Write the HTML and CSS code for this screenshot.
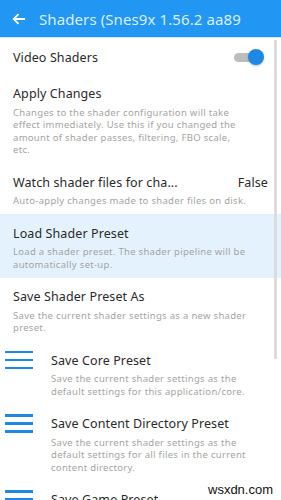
FILE: index.html
```html
<!DOCTYPE html>
<html>
<head>
<meta charset="utf-8">
<link rel="stylesheet" href="styles.css">
</head>
<body>
<div class="app">
  <header class="bar">
    <svg class="back" width="14" height="12" viewBox="0 0 14 12"><path d="M13 6H2M6.5 1.2L1.7 6l4.8 4.8" fill="none" stroke="#fff" stroke-width="1.8"/></svg>
    <span class="title">Shaders (Snes9x 1.56.2 aa89</span>
  </header>
  <main class="list">
    <div class="row">
      <div class="head"><span class="label">Video Shaders</span>
        <span class="toggle"><span class="track"></span><span class="thumb"></span></span>
      </div>
    </div>
    <div class="row">
      <div class="head"><span class="label">Apply Changes</span></div>
      <p class="desc">Changes to the shader configuration will take effect immediately. Use this if you changed the amount of shader passes, filtering, FBO scale, etc.</p>
    </div>
    <div class="row">
      <div class="head"><span class="label">Watch shader files for cha...</span><span class="value">False</span></div>
      <p class="desc">Auto-apply changes made to shader files on disk.</p>
    </div>
    <div class="row selected">
      <div class="head"><span class="label">Load Shader Preset</span></div>
      <p class="desc">Load a shader preset. The shader pipeline will be automatically set-up.</p>
    </div>
    <div class="row">
      <div class="head"><span class="label">Save Shader Preset As</span></div>
      <p class="desc">Save the current shader settings as a new shader preset.</p>
    </div>
    <div class="row icon-row">
      <span class="menu-icon"><i></i><i></i><i></i></span>
      <div class="body">
        <div class="head"><span class="label">Save Core Preset</span></div>
        <p class="desc">Save the current shader settings as the default settings for this application/core.</p>
      </div>
    </div>
    <div class="row icon-row">
      <span class="menu-icon"><i></i><i></i><i></i></span>
      <div class="body">
        <div class="head"><span class="label">Save Content Directory Preset</span></div>
        <p class="desc">Save the current shader settings as the default settings for all files in the current content directory.</p>
      </div>
    </div>
    <div class="row icon-row">
      <span class="menu-icon"><i></i><i></i><i></i></span>
      <div class="body">
        <div class="head"><span class="label">Save Game Preset</span></div>
        <p class="desc">Save the current shader settings as the default settings for the content.</p>
      </div>
    </div>
  </main>
  <div class="scrollbar"></div>
  <div class="watermark">wsxdn.com</div>
</div>
</body>
</html>
```

FILE: styles.css
```css
* { box-sizing: border-box; }
html, body { margin: 0; padding: 0; }
body {
  width: 281px;
  height: 500px;
  overflow: hidden;
  background: #fff;
  font-family: "Noto Sans", "Open Sans", sans-serif;
}
.app { position: relative; width: 281px; height: 500px; overflow: hidden; }
.bar {
  height: 38px;
  background: #2196f3;
  border-bottom: 1px solid #d8e6f2;
  display: flex;
  align-items: center;
  padding-left: 12px;
  gap: 13px;
}
.back { flex: none; }
.title {
  color: #dcefff;
  font-size: 15px;
  letter-spacing: 0.1px;
  white-space: nowrap;
}
.list { display: flex; flex-direction: column; }
.row {
  padding: 8px 13px 6.5px 13px;
}
.row.selected { background: #e3f2fd; }
.head {
  height: 22px;
  display: flex;
  align-items: center;
  justify-content: space-between;
}
.label {
  font-size: 12.5px;
  letter-spacing: 0.1px;
  color: #2a2a2a;
  white-space: nowrap;
}
.value { font-size: 12.5px; letter-spacing: 0.1px; color: #2a2a2a; }
.desc {
  margin: 2px 18px 0 0;
  font-size: 9.5px;
  letter-spacing: 0.3px;
  line-height: 12.5px;
  color: #a4a4a4;
}
.toggle { position: relative; width: 30px; height: 16px; margin-right: 4px; }
.track {
  position: absolute;
  left: 0; top: 3.5px;
  width: 26px; height: 9px;
  border-radius: 5px;
  background: #bdbdbd;
}
.thumb {
  position: absolute;
  right: 0; top: 0;
  width: 16px; height: 16px;
  border-radius: 50%;
  background: #1e88e5;
  box-shadow: 0 1px 2px rgba(0,0,0,0.25);
}
.icon-row {
  display: flex;
  padding-left: 5px;
  gap: 18px;
}
.body { flex: 1; min-width: 0; }
.menu-icon {
  flex: none;
  width: 28px;
  height: 22px;
  display: flex;
  flex-direction: column;
  justify-content: center;
  gap: 5.5px;
}
.menu-icon i {
  display: block;
  height: 2.5px;
  background: #1e88e5;
}
.scrollbar {
  position: absolute;
  left: 274px;
  top: 40px;
  width: 3px;
  height: 319px;
  background: #dcdcdc;
}
.watermark {
  position: absolute;
  left: 204px;
  top: 482px;
  padding: 0 4px;
  background: #fff;
  font-family: "Liberation Sans", Arial, sans-serif;
  font-size: 13px;
  line-height: 16px;
  color: #111;
}
```
